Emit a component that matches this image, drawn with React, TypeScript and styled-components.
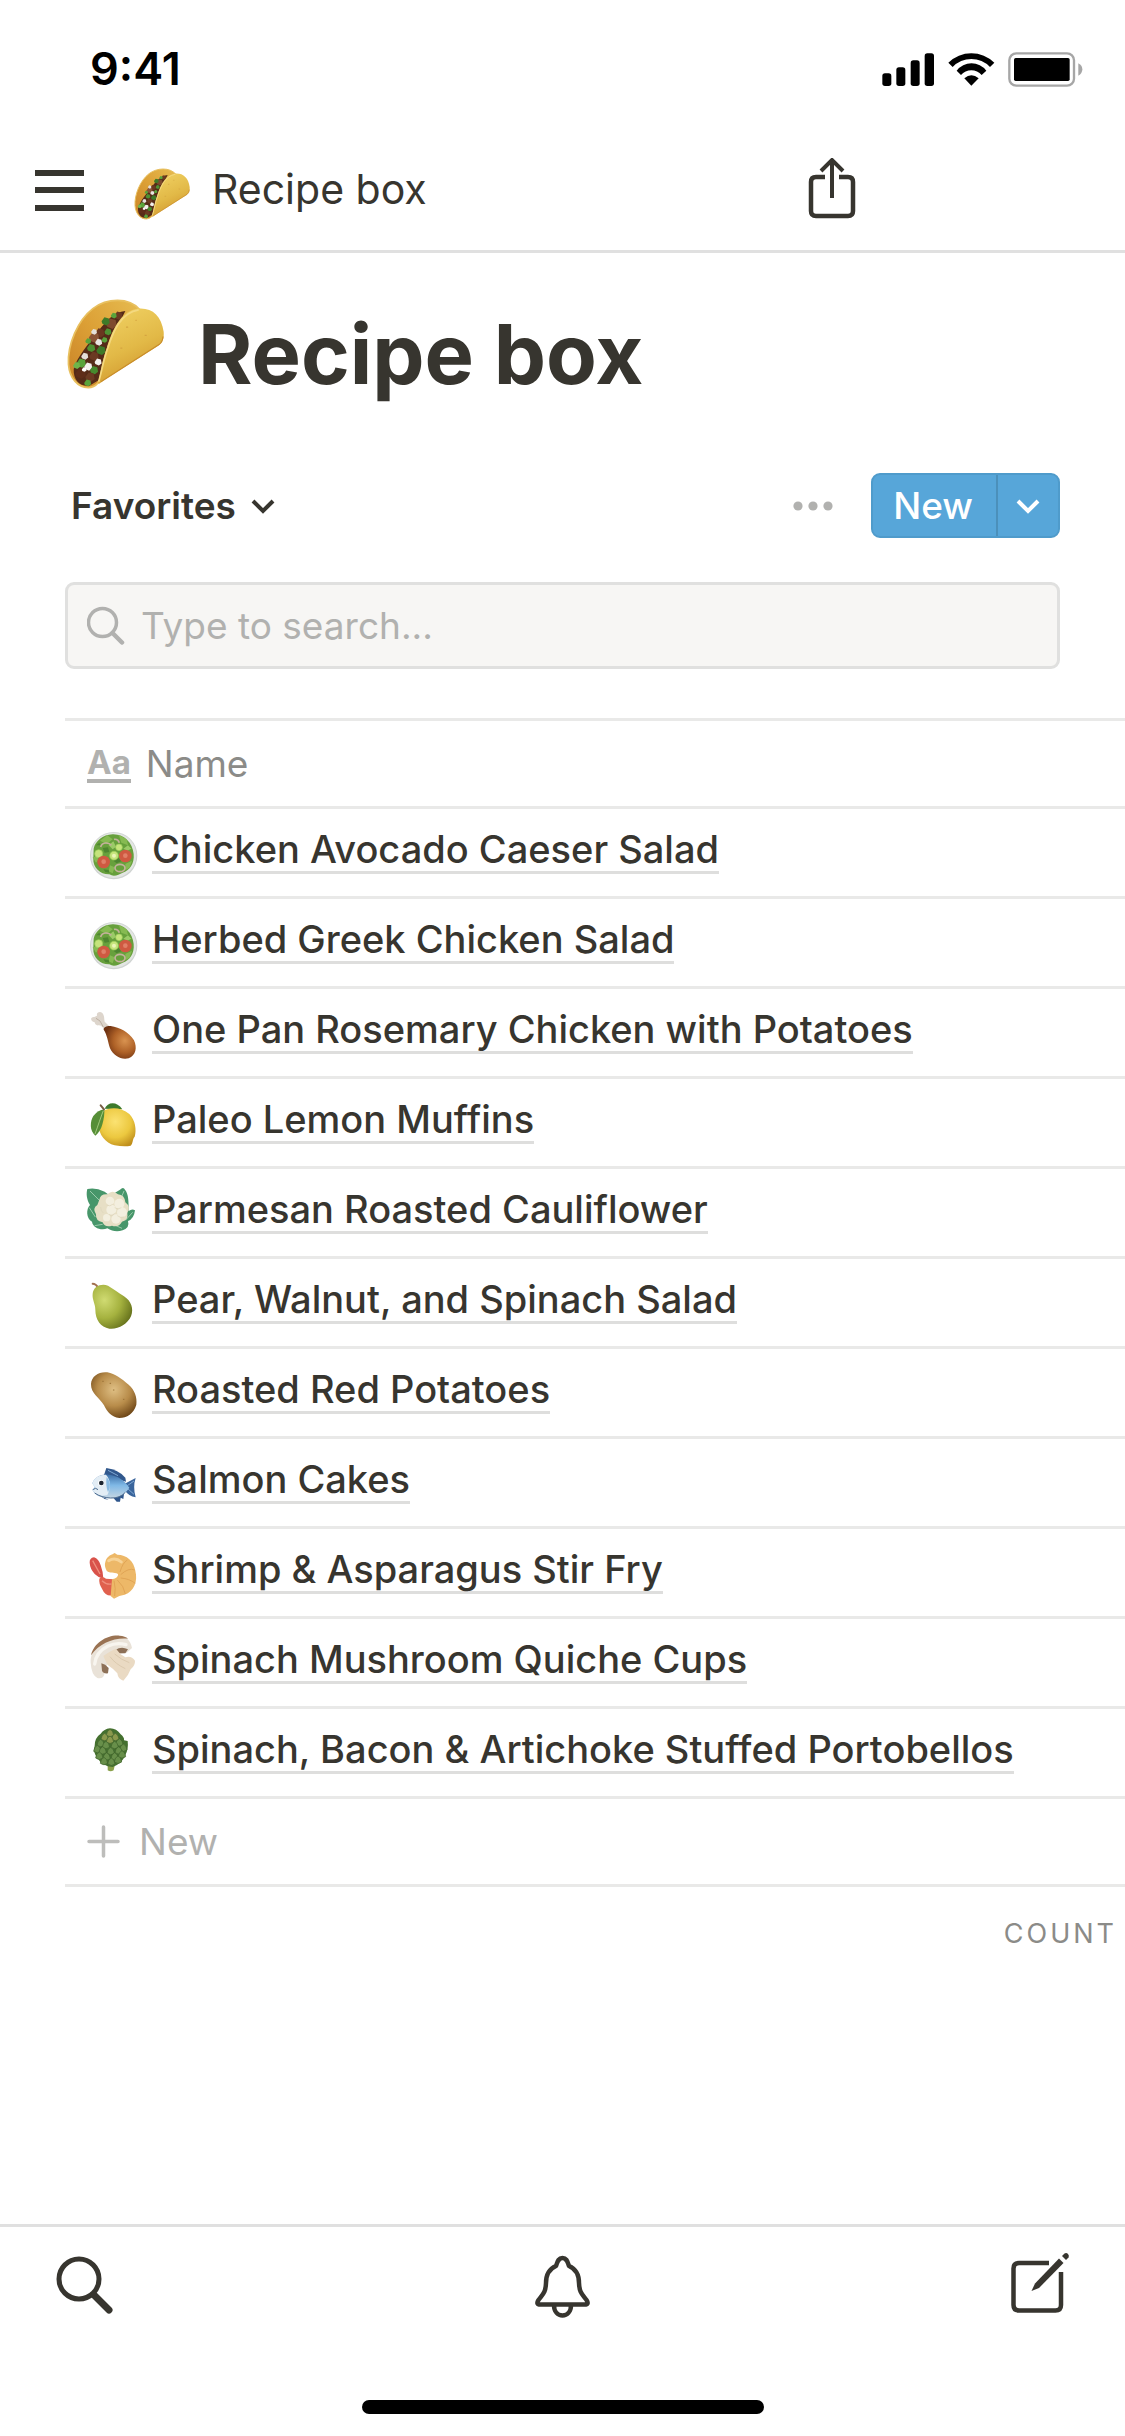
import React from "react";
import styled, { createGlobalStyle } from "styled-components";

const ink = "#37352f";
const line = "#e9e9e8";
const strongLine = "#e0e0e0";
const faint = "#b1b1af";

const GlobalStyle = createGlobalStyle`
  *, *::before, *::after { box-sizing: border-box; }
  body {
    margin: 0;
    background: #fff;
    color: ${ink};
    font-family: Inter, "Liberation Sans", sans-serif;
    font-size: 37px;
    line-height: 44px;
  }
  button, input { font: inherit; color: inherit; }
  svg { display: block; flex: none; }
`;

const Screen = styled.div`
  display: flex;
  flex-direction: column;
  min-height: 100vh;
  overflow-x: hidden;
`;

const StatusBar = styled.div`
  display: flex;
  align-items: center;
  justify-content: space-between;
  height: 128px;
  padding: 10px 42px 0 90px;
`;

const Clock = styled.time`
  color: #000;
  font-size: 45px;
  font-weight: 600;
`;

const PlainButton = styled.button`
  display: flex;
  align-items: center;
  padding: 0;
  border: 0;
  background: none;
  cursor: pointer;
`;

const TopBar = styled.header`
  display: flex;
  align-items: center;
  justify-content: space-between;
  height: 125px;
  padding: 0 269px 0 35px;
  border-bottom: 3px solid ${strongLine};
`;

const Crumb = styled.div`
  display: flex;
  align-items: center;
  flex: 1;
  gap: 21px;
  margin-left: 49px;
`;

const CrumbIcon = styled.span`
  padding-top: 9px;
`;

const CrumbText = styled.span`
  font-size: 41px;
`;

const Main = styled.main`
  flex: 1;
  padding: 44px 0 0 65px;
`;

const TitleRow = styled.div`
  display: flex;
  align-items: flex-start;
  gap: 32px;
`;

const Title = styled.h1`
  margin: 0;
  padding-top: 7px;
  font-size: 83px;
  line-height: 100px;
  font-weight: 700;
`;

const Toolbar = styled.div`
  display: flex;
  align-items: center;
  margin: 69px 65px 0 0;
`;

const ViewButton = styled(PlainButton)`
  gap: 15px;
  margin-right: auto;
  padding-left: 6px;
  font-weight: 600;
`;

const MoreButton = styled(PlainButton)`
  margin-right: 38px;
`;

const SplitButton = styled.div`
  display: flex;
  height: 65px;
  overflow: hidden;
  border: 2px solid #4f9bcb;
  border-radius: 9px;
  background: #57a6d9;
  color: #fff;
`;

const NewButton = styled(PlainButton)`
  padding: 0 23px 0 20px;
  font-weight: 500;
`;

const NewMenuButton = styled(PlainButton)`
  justify-content: center;
  width: 62px;
  border-left: 2px solid #4b90bb;
`;

const SearchBox = styled.label`
  display: flex;
  align-items: center;
  gap: 16px;
  height: 87px;
  margin: 44px 65px 49px 0;
  padding: 0 19px;
  border: 3px solid #e0e0df;
  border-radius: 9px;
  background: #f7f6f4;
`;

const SearchInput = styled.input.attrs({ type: "text" })`
  flex: 1;
  min-width: 0;
  padding: 0;
  border: 0;
  outline: 0;
  background: none;
  &::placeholder { color: ${faint}; opacity: 1; }
`;

const Table = styled.table`
  width: 100%;
  border-spacing: 0;
  text-align: left;
`;

const cell = `
  padding: 0;
  border-top: 3px solid ${line};
  font-weight: 400;
`;

const HeadCell = styled.th`
  ${cell}
  height: 88px;
`;

const HeadLabel = styled.div`
  display: flex;
  align-items: center;
  gap: 15px;
  padding-left: 22px;
  color: #8b8b88;
`;

const TypeMark = styled.span`
  border-bottom: 4px solid ${faint};
  color: ${faint};
  font-size: 33px;
  line-height: 34px;
  font-weight: 700;
`;

const Cell = styled.td`
  ${cell}
  height: 90px;
`;

const RecipeRow = styled.div`
  display: flex;
  align-items: center;
  gap: 12px;
  height: 87px;
  padding-left: 21px;
`;

const RecipeLink = styled.a`
  margin-bottom: 4px;
  border-bottom: 3px solid #dededd;
  color: inherit;
  font-size: 38px;
  font-weight: 500;
  text-decoration: none;
  white-space: nowrap;
`;

const AddCell = styled.td`
  ${cell}
  height: 88px;
`;

const AddButton = styled(PlainButton)`
  gap: 19px;
  width: 100%;
  height: 85px;
  padding-left: 22px;
  color: ${faint};
`;

const CountCell = styled.td`
  ${cell}
  padding: 27px 8px 0 0;
  color: #8b8b88;
  font-size: 27px;
  line-height: 40px;
  letter-spacing: 3px;
  text-align: right;
`;

const BottomBar = styled.nav`
  border-top: 3px solid ${strongLine};
  padding-top: 25px;
`;

const Tabs = styled.div`
  display: flex;
  justify-content: space-between;
  padding: 0 54px;
`;

const HomeIndicator = styled.div`
  width: 402px;
  height: 14px;
  margin: 82px auto 22px;
  border-radius: 7px;
  background: #000;
`;

/* ---------- pictures ---------- */

function Taco({ id, width, height }: { id: string; width: number; height: number }) {
  const bits: [number, number, number, string][] = [
    [192, 112, 7, "#6b3a22"], [180, 126, 9, "#7d4a2e"], [170, 122, 7, "#3e7a28"], [160, 142, 8, "#6a3720"],
    [150, 150, 9, "#8a5436"], [174, 140, 6, "#4f9133"], [158, 158, 6, "#e9e6e2"], [145, 168, 7, "#4f9133"],
    [162, 172, 8, "#3e7a28"], [150, 182, 8, "#6b3a22"], [134, 182, 6, "#e4e0da"], [128, 194, 8, "#59a33b"],
    [140, 200, 7, "#f3f1ee"], [157, 192, 6, "#f3f1ee"], [150, 206, 7, "#478a2e"], [127, 212, 9, "#5f2d19"],
    [143, 218, 8, "#6b3a22"], [120, 198, 6, "#6fb54a"], [139, 228, 6, "#59a33b"], [133, 205, 4, "#fff"],
    [150, 140, 5, "#e4e0da"], [140, 156, 5, "#59a33b"], [184, 112, 5, "#59a33b"], [168, 154, 5, "#59a33b"],
  ];
  return (
    <svg width={width} height={height} viewBox="100 80 174 162" aria-hidden="true">
      <defs>
        <linearGradient id={`${id}b`} x1="0" y1="1" x2="1" y2="0">
          <stop offset="0" stopColor="#c98227" />
          <stop offset=".5" stopColor="#dca036" />
          <stop offset="1" stopColor="#e6bb4f" />
        </linearGradient>
        <linearGradient id={`${id}f`} x1=".2" y1="0" x2=".6" y2="1">
          <stop offset="0" stopColor="#f0d163" />
          <stop offset=".55" stopColor="#e2b947" />
          <stop offset="1" stopColor="#cf942b" />
        </linearGradient>
      </defs>
      <path d="M140 236C122 236 108 220 106 196C104 162 122 120 148 100C172 82 210 80 229 102L190 170L157 228Q150 236 140 236Z" fill={`url(#${id}b)`} stroke="#e8c05f" strokeWidth="3" />
      <path d="M204 104C184 106 170 122 158 138C142 158 120 184 115 204C114 222 124 234 142 233L160 222L186 140Z" fill="#552b18" />
      {bits.map(([x, y, r, fill], i) => (
        <path key={i} d={`M${x - r} ${y}L${x - r * 0.3} ${y - r}L${x + r * 0.8} ${y - r * 0.7}L${x + r} ${y + r * 0.4}L${x + r * 0.2} ${y + r}L${x - r * 0.8} ${y + r * 0.6}Z`} fill={fill} />
      ))}
      <path d="M157 228C162 208 164 190 172 168C180 142 194 104 226 100C250 98 266 112 270 140C271 152 268 158 262 163L166 224Q158 232 157 228Z" fill={`url(#${id}f)`} />
      <path d="M158 226C164 206 166 188 174 167C182 142 196 106 227 102" fill="none" stroke="#f4d980" strokeWidth="3" />
      <path d="M162 226L262 162Q268 158 269 148" fill="none" stroke="#c98d2a" strokeWidth="2" />
      <path d="M206 132h2M238 146h2M196 168h2M222 120h1" stroke="#d5a441" strokeWidth="2" strokeLinecap="round" />
    </svg>
  );
}

function Food({ origin, children }: { origin: number; children: React.ReactNode }) {
  return (
    <svg width="54" height="57" viewBox={`78 ${origin} 162 171`} aria-hidden="true">
      {children}
    </svg>
  );
}

function Salad() {
  return (
    <Food origin={76}>
      <circle cx="161" cy="171" r="71" fill="#d0d4d2" />
      <circle cx="161" cy="170" r="68" fill="#e3e6e3" />
      <path d="M101 150C106 128 128 108 158 107C192 106 218 132 221 166C224 196 208 216 188 222C176 228 162 236 148 227C122 228 98 206 100 180Z" fill="#67a03c" />
      <g fill="#86ba52">
        <path d="M120 126l22-16 16 12-18 14zM176 108l24 14 4 18-20-8zM98 176l14-4 4 12-8 8zM150 200l14 6-6 18-12-6zM196 196l20-10-8 22-12 6z" />
        <path d="M146 140l14-12 8 16-10 8zM190 150l14-10 10 10-12 6z" fill="#9bca67" />
      </g>
      <g fill="#4d8530">
        <path d="M128 148l16-2 4 14-14 2zM160 186l16-8 8 10-14 6zM130 212l16 2 2 8-12-2zM108 140l10-8 4 8z" />
      </g>
      <g fill="none" stroke="#c4b09c" strokeWidth="5">
        <path d="M122 145C126 130 146 130 154 140" />
        <path d="M162 122q12-2 16 10" />
        <ellipse cx="180" cy="208" rx="15" ry="11" />
      </g>
      <g fill="#c5e47c" stroke="#9ccb58" strokeWidth="2">
        <circle cx="116" cy="165" r="12" />
        <circle cx="177" cy="146" r="10" />
        <circle cx="162" cy="171" r="13" />
      </g>
      <circle cx="162" cy="171" r="6" fill="#eaf5b8" />
      <g fill="#cf5941">
        <circle cx="131" cy="190" r="19" />
        <circle cx="196" cy="172" r="19" />
      </g>
      <g fill="#e08068">
        <circle cx="131" cy="189" r="7" />
        <circle cx="196" cy="171" r="7" />
      </g>
    </Food>
  );
}

function Drumstick() {
  return (
    <Food origin={615}>
      <defs>
        <radialGradient id="meat" cx=".66" cy=".45" r=".65">
          <stop offset="0" stopColor="#d99350" />
          <stop offset=".55" stopColor="#ae6127" />
          <stop offset="1" stopColor="#6e3212" />
        </radialGradient>
      </defs>
      <path d="M111 650C108 640 120 636 127 642C134 650 132 660 134 668L148 682L136 693L123 680C116 680 105 680 104 670C90 668 90 652 103 654Z" fill="#ddd5cc" />
      <path d="M108 658l12 8 10 18" fill="none" stroke="#bdb0a3" strokeWidth="3" />
      <path d="M131 692C130 684 142 680 152 681C180 686 206 698 222 724C232 746 228 770 206 778C184 784 160 770 150 748C144 730 142 708 131 692Z" fill="url(#meat)" />
    </Food>
  );
}

function Lemon() {
  return (
    <Food origin={14}>
      <defs>
        <radialGradient id="lemon" cx=".45" cy=".35" r=".7">
          <stop offset="0" stopColor="#fbe272" />
          <stop offset=".6" stopColor="#ecc83f" />
          <stop offset="1" stopColor="#c08f1c" />
        </radialGradient>
      </defs>
      <path d="M134 58C142 38 170 34 187 60Z" fill="#3d7a2c" />
      <path d="M128 66C152 52 184 54 208 74C226 92 230 122 224 142C216 150 220 162 212 169Q194 173 164 168C136 160 116 136 116 106Q116 78 128 66Z" fill="url(#lemon)" />
      <path d="M133 60C134 86 126 126 106 139C88 124 90 96 100 80Q114 62 133 60Z" fill="#568e37" />
      <path d="M130 64C122 84 114 110 105 134" fill="none" stroke="#a1c87c" strokeWidth="3" />
      <path d="M122 48l10 12" stroke="#785d43" strokeWidth="6" strokeLinecap="round" />
    </Food>
  );
}

function Cauliflower() {
  return (
    <Food origin={283}>
      <path d="M82 298Q106 292 134 306L150 318L180 300Q190 290 195 300C206 314 206 336 206 364Q216 356 225 362Q222 388 204 394Q210 414 188 422C170 428 156 424 142 416C124 424 98 414 96 396C78 386 78 358 90 346C80 330 78 312 82 298Z" fill="#47966a" />
      <path d="M90 304L120 334M88 354l18 28M192 304l-10 24M218 368l-22 24M104 408l24-4M186 416l-18-8" stroke="#9bcbab" strokeWidth="3" fill="none" />
      <path d="M118 330Q122 312 142 314Q158 298 174 314Q194 316 196 338Q214 352 202 370Q206 392 186 396Q176 414 156 408Q134 414 128 398Q106 394 108 374Q96 356 112 346Z" fill="#e7dfc5" />
      <g fill="#f3efdf">
        <circle cx="150" cy="334" r="13" /><circle cx="178" cy="342" r="15" /><circle cx="186" cy="368" r="15" />
        <circle cx="154" cy="360" r="15" /><circle cx="168" cy="388" r="14" /><circle cx="140" cy="384" r="11" />
      </g>
      <g fill="none" stroke="#ddd4b9" strokeWidth="2">
        <path d="M140 346q10 6 18-2M164 354q10 8 20 0M146 374q12 8 18-4M172 378q8 8 20 4M122 352q0 12 8 18" />
      </g>
    </Food>
  );
}

function Pear() {
  return (
    <Food origin={553}>
      <defs>
        <radialGradient id="pear" cx=".3" cy=".35" r=".75">
          <stop offset="0" stopColor="#d0db72" />
          <stop offset=".55" stopColor="#a5b23f" />
          <stop offset="1" stopColor="#68741d" />
        </radialGradient>
      </defs>
      <path d="M98 582Q108 582 114 594" fill="none" stroke="#a2704f" strokeWidth="6" strokeLinecap="round" />
      <path d="M98 612C100 590 124 580 144 588C160 598 174 608 192 620C214 634 222 658 213 680C202 704 174 720 148 717C122 712 106 690 106 660C106 642 96 630 98 612Z" fill="url(#pear)" />
    </Food>
  );
}

function Potato() {
  return (
    <Food origin={12}>
      <defs>
        <radialGradient id="potato" cx=".5" cy=".38" r=".65">
          <stop offset="0" stopColor="#dfbf84" />
          <stop offset=".55" stopColor="#b88c4a" />
          <stop offset="1" stopColor="#6d4516" />
        </radialGradient>
      </defs>
      <path d="M93 72C94 48 118 34 142 37C166 42 184 56 206 74C224 90 232 112 229 134C222 160 200 174 178 174C154 172 142 156 132 136C118 112 92 100 93 72Z" fill="url(#potato)" />
      <path d="M128 64h2M160 90h2M190 118h2M150 70h2" stroke="#9a7237" strokeWidth="3" strokeLinecap="round" />
    </Food>
  );
}

function Fish() {
  return (
    <Food origin={281}>
      <defs>
        <linearGradient id="fish" x1="0" y1="0" x2="0" y2="1">
          <stop offset="0" stopColor="#3c6fa8" />
          <stop offset=".45" stopColor="#7fb8e6" />
          <stop offset="1" stopColor="#c7d7e3" />
        </linearGradient>
      </defs>
      <path d="M132 344L139 323Q176 328 196 352L198 364Z" fill="#31588d" />
      <path d="M156 408L170 424H180L182 412L190 416L192 400ZM120 406l14 10 12 2z" fill="#2f568c" />
      <path d="M194 370L227 353Q218 380 227 411Q206 408 194 390Z" fill="#3a659c" />
      <path d="M202 376l20-14M202 384l20 18M144 330l30 16" stroke="#7fa8d3" strokeWidth="3" />
      <path d="M97 369C104 350 126 340 146 343C174 346 194 360 208 382C196 402 174 414 152 414C126 414 106 408 98 390L104 380Z" fill="url(#fish)" />
      <path d="M97 369C104 350 120 342 138 343C154 360 152 386 142 404Q112 412 98 390L106 383Z" fill="#e3edf5" />
      <path d="M140 350Q158 370 144 396Q136 374 140 350Z" fill="#8bbce3" />
      <path d="M98 388Q108 380 114 388M104 398Q124 412 152 413T196 396" fill="none" stroke="#4e6c8f" strokeWidth="3" />
      <circle cx="123" cy="368" r="9" fill="#fff" />
      <circle cx="124" cy="368" r="7" fill="#1c2530" />
    </Food>
  );
}

function Shrimp() {
  return (
    <Food origin={550}>
      <path d="M89 606Q88 592 102 590Q116 594 122 614Q130 636 130 654Q116 652 104 640Q90 624 89 606Z" fill="#d9524a" />
      <path d="M118 654Q126 644 138 654L160 656L158 704Q136 708 126 684Q116 668 118 654Z" fill="#e0604e" />
      <path d="M98 600Q108 618 120 640M126 660Q138 672 154 670" fill="none" stroke="#ee8f7d" strokeWidth="4" />
      <path d="M136 604C140 584 158 582 164 577L172 582C200 582 222 602 226 630C234 662 222 692 194 702Q178 704 162 714L152 706L156 656Q176 652 174 640C162 632 150 640 140 630Q132 616 136 604Z" fill="#edb868" />
      <path d="M146 600Q166 588 184 604" fill="none" stroke="#f7d397" strokeWidth="9" strokeLinecap="round" />
      <g fill="none" stroke="#d99a4b" strokeWidth="2">
        <path d="M180 634Q188 606 202 598M182 642Q206 620 224 628M182 652Q208 654 226 668M172 658Q192 676 196 700M162 660Q168 684 164 706" />
      </g>
    </Food>
  );
}

function Mushroom() {
  return (
    <Food origin={40}>
      <path d="M92 126C90 80 132 44 178 45C196 46 212 58 216 82L200 96L150 104L134 156Q132 176 112 172Q94 162 92 126Z" fill="#e9e2d8" />
      <path d="M93 104C102 66 142 42 178 45Q196 46 204 54C162 50 118 68 93 104Z" fill="#9a7353" />
      <path d="M166 88Q184 76 204 86L196 98L176 98ZM124 128Q136 130 146 142L144 158Q130 160 126 150Z" fill="#8d7057" />
      <path d="M130 106Q152 90 168 84Q178 100 196 110Q214 104 225 120Q226 134 212 146Q206 164 190 180Q174 176 172 158Q158 142 142 132Z" fill="#eadac3" />
      <path d="M150 108Q166 130 196 144M164 100Q184 118 208 126" fill="none" stroke="#dccaaf" strokeWidth="3" />
      <path d="M104 130Q108 94 144 76Q170 64 198 72" fill="none" stroke="#f8f5ef" strokeWidth="10" strokeLinecap="round" />
    </Food>
  );
}

function Artichoke() {
  const scales: [number, number][] = [
    [150, 338], [134, 350], [166, 350], [150, 358], [122, 368], [178, 366], [138, 374], [164, 374],
    [112, 386], [190, 382], [128, 390], [152, 392], [176, 390], [118, 406], [140, 408], [164, 408], [186, 402], [132, 422], [154, 424], [174, 418],
  ];
  return (
    <Food origin={309}>
      <path d="M143 430h22l-4 18q-10 6-18 0z" fill="#8aa04a" />
      <path d="M150 322Q170 322 182 340Q194 350 192 358L203 360Q206 384 196 402Q186 428 158 438Q126 436 112 410Q98 394 104 374Q104 350 122 338Q132 324 150 322Z" fill="#44702f" />
      {scales.map(([x, y]) => (
        <path key={`${x}-${y}`} d={`M${x - 11} ${y + 5}Q${x - 10} ${y - 9} ${x} ${y - 13}Q${x + 10} ${y - 9} ${x + 11} ${y + 5}Q${x} ${y + 14} ${x - 11} ${y + 5}Z`} fill={y < 360 ? "#8b994d" : "#688f4a"} stroke="#3c6129" strokeWidth="2" />
      ))}
    </Food>
  );
}

function StatusIcons() {
  return (
    <svg width="202" height="37" viewBox="62 92 606 111" role="img" aria-label="Signal, Wi-Fi and battery full">
      <rect x="66" y="159" width="27" height="38" rx="8" />
      <rect x="108" y="141" width="27" height="56" rx="8" />
      <rect x="151" y="120" width="27" height="77" rx="8" />
      <rect x="193" y="99" width="28" height="98" rx="8" />
      <path d="M264 127A98 98 0 0 1 402 127L389 140A77 77 0 0 0 277 140Z" />
      <path d="M289 151A56 56 0 0 1 378 151L364 164A41 41 0 0 0 302 164Z" />
      <path d="M312 174Q333 156 355 174L333 196Z" />
      <rect x="447" y="99" width="194" height="97" rx="21" fill="none" stroke="#a6a6a6" strokeWidth="7" />
      <rect x="461" y="113" width="167" height="69" rx="5" />
      <path d="M654 129Q666 135 666 147Q666 160 654 166Z" fill="#a6a6a6" />
    </svg>
  );
}

function Chevron() {
  return (
    <svg width="24" height="16" viewBox="0 0 24 16" fill="none" stroke="currentColor" strokeWidth="4" aria-hidden="true">
      <path d="M2 3L12 13L22 3" />
    </svg>
  );
}

const recipes: { name: string; Icon: () => React.JSX.Element }[] = [
  { name: "Chicken Avocado Caeser Salad", Icon: Salad },
  { name: "Herbed Greek Chicken Salad", Icon: Salad },
  { name: "One Pan Rosemary Chicken with Potatoes", Icon: Drumstick },
  { name: "Paleo Lemon Muffins", Icon: Lemon },
  { name: "Parmesan Roasted Cauliflower", Icon: Cauliflower },
  { name: "Pear, Walnut, and Spinach Salad", Icon: Pear },
  { name: "Roasted Red Potatoes", Icon: Potato },
  { name: "Salmon Cakes", Icon: Fish },
  { name: "Shrimp & Asparagus Stir Fry", Icon: Shrimp },
  { name: "Spinach Mushroom Quiche Cups", Icon: Mushroom },
  { name: "Spinach, Bacon & Artichoke Stuffed Portobellos", Icon: Artichoke },
];

export default function App() {
  return (
    <Screen>
      <GlobalStyle />
      <StatusBar>
        <Clock>9:41</Clock>
        <StatusIcons />
      </StatusBar>

      <TopBar>
        <PlainButton aria-label="Open menu">
          <svg width="49" height="50" viewBox="0 0 49 50" fill={ink} aria-hidden="true">
            <rect y="6" width="49" height="6" />
            <rect y="23" width="49" height="6" />
            <rect y="41" width="49" height="6" />
          </svg>
        </PlainButton>
        <Crumb>
          <CrumbIcon>
            <Taco id="small" width={58} height={54} />
          </CrumbIcon>
          <CrumbText>Recipe box</CrumbText>
        </Crumb>
        <PlainButton aria-label="Share">
          <svg width="48" height="62" viewBox="808 162 48 62" fill="none" stroke={ink} strokeWidth="4.5" aria-hidden="true">
            <path d="M825 181H816Q811 181 811 186V215Q811 220 816 220H848Q853 220 853 215V186Q853 181 848 181H839" />
            <path d="M832 202V165M821 175L832 164L843 175" strokeWidth="4" />
          </svg>
        </PlainButton>
      </TopBar>

      <Main>
        <TitleRow>
          <Taco id="large" width={101} height={94} />
          <Title>Recipe box</Title>
        </TitleRow>

        <Toolbar>
          <ViewButton>
            Favorites
            <Chevron />
          </ViewButton>
          <MoreButton aria-label="More options">
            <svg width="40" height="40" viewBox="0 0 40 40" fill="#b1b1af" aria-hidden="true">
              <circle cx="5" cy="20" r="4.6" />
              <circle cx="20" cy="20" r="4.6" />
              <circle cx="35" cy="20" r="4.6" />
            </svg>
          </MoreButton>
          <SplitButton>
            <NewButton>New</NewButton>
            <NewMenuButton aria-label="New from template">
              <Chevron />
            </NewMenuButton>
          </SplitButton>
        </Toolbar>

        <SearchBox>
          <svg width="38" height="40" viewBox="0 0 38 40" fill="none" stroke={faint} aria-hidden="true">
            <circle cx="15.5" cy="16.5" r="14" strokeWidth="3.5" />
            <path d="M25.5 27L35 36.5" strokeWidth="4.5" strokeLinecap="round" />
          </svg>
          <SearchInput placeholder="Type to search..." aria-label="Search recipes" />
        </SearchBox>

        <Table>
          <thead>
            <tr>
              <HeadCell scope="col">
                <HeadLabel>
                  <TypeMark aria-hidden="true">Aa</TypeMark>
                  Name
                </HeadLabel>
              </HeadCell>
            </tr>
          </thead>
          <tbody>
            {recipes.map(({ name, Icon }) => (
              <tr key={name}>
                <Cell>
                  <RecipeRow>
                    <Icon />
                    <RecipeLink href="#">{name}</RecipeLink>
                  </RecipeRow>
                </Cell>
              </tr>
            ))}
          </tbody>
          <tfoot>
            <tr>
              <AddCell>
                <AddButton>
                  <svg width="33" height="33" viewBox="0 0 33 33" stroke="#bdbdbb" strokeWidth="3.5" strokeLinecap="round" aria-hidden="true">
                    <path d="M16.5 2V31M2 16.5H31" />
                  </svg>
                  New
                </AddButton>
              </AddCell>
            </tr>
            <tr>
              <CountCell>COUNT</CountCell>
            </tr>
          </tfoot>
        </Table>
      </Main>

      <BottomBar>
        <Tabs>
          <PlainButton aria-label="Search">
            <svg width="60" height="66" viewBox="54 2252 60 66" fill="none" stroke={ink} aria-hidden="true">
              <circle cx="79" cy="2279" r="20" strokeWidth="5" />
              <path d="M94 2295L109 2310" strokeWidth="7" strokeLinecap="round" />
            </svg>
          </PlainButton>
          <PlainButton aria-label="Notifications">
            <svg width="60" height="66" viewBox="533 2252 60 66" fill="none" stroke={ink} strokeWidth="4.5" strokeLinejoin="round" aria-hidden="true">
              <path d="M562.5 2258C558 2258 557.5 2262 556 2266C549 2269 546 2276 546 2283C545.5 2293 543 2294 538.5 2300Q536 2304 539 2304.500H586Q589 2304 586.5 2300C582 2294 579.5 2293 579 2283C579 2276 576 2269 569 2266C567.5 2262 567 2258 562.5 2258Z" />
              <path d="M554 2305C554 2312 558 2315.5 562.5 2315.5S571 2312 571 2305" />
            </svg>
          </PlainButton>
          <PlainButton aria-label="New page">
            <svg width="60" height="66" viewBox="1012 2252 60 66" fill="none" stroke={ink} strokeWidth="4.5" aria-hidden="true">
              <path d="M1050 2263H1020Q1014.5 2263 1014.5 2268.500V2305Q1014.5 2310.5 1020 2310.500H1056.500Q1062 2310.5 1062 2305V2272" />
              <path d="M1032.5 2291L1036 2283.500L1060 2258.500L1064.5 2263L1040 2288Z" fill={ink} stroke="none" />
              <path d="M1063 2256L1065.500 2253.500Q1067.500 2252.500 1069 2254T1069.500 2257.500L1067 2260Z" fill={ink} stroke="none" />
            </svg>
          </PlainButton>
        </Tabs>
        <HomeIndicator />
      </BottomBar>
    </Screen>
  );
}
